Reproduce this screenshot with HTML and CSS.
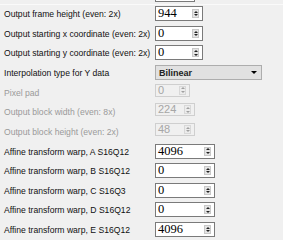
FILE: index.html
```html
<!DOCTYPE html>
<html lang="en">
<head>
  <meta charset="UTF-8">
  <title>Scaler settings</title>
  <link rel="stylesheet" href="styles.css">
</head>
<body>
  <div class="form">
    <div class="row">
      <span class="lbl"></span>
      <div class="box w40"></div>
    </div>
    <div class="top-rule"></div>
    <div class="row">
      <span class="lbl">Output frame height (even: 2x)</span>
      <div class="box w48"><span class="val">944</span><span class="arrows"><i class="up"></i><i class="down"></i></span></div>
    </div>
    <div class="row">
      <span class="lbl">Output starting x coordinate (even: 2x)</span>
      <div class="box w48"><span class="val">0</span><span class="arrows"><i class="up"></i><i class="down"></i></span></div>
    </div>
    <div class="row">
      <span class="lbl">Output starting y coordinate (even: 2x)</span>
      <div class="box w48"><span class="val">0</span><span class="arrows"><i class="up"></i><i class="down"></i></span></div>
    </div>
    <div class="row">
      <span class="lbl">Interpolation type for Y data</span>
      <div class="select"><span class="sel-val">Bilinear</span><i class="caret"></i></div>
    </div>
    <div class="row off">
      <span class="lbl">Pixel pad</span>
      <div class="box w35"><span class="val">0</span><span class="arrows"><i class="up"></i><i class="down"></i></span></div>
    </div>
    <div class="row off">
      <span class="lbl">Output block width (even: 8x)</span>
      <div class="box w40"><span class="val">224</span><span class="arrows"><i class="up"></i><i class="down"></i></span></div>
    </div>
    <div class="row off">
      <span class="lbl">Output block height (even: 2x)</span>
      <div class="box w40"><span class="val">48</span><span class="arrows"><i class="up"></i><i class="down"></i></span></div>
    </div>
    <div class="row">
      <span class="lbl">Affine transform warp, A S16Q12</span>
      <div class="box w60"><span class="val">4096</span><span class="arrows"><i class="up"></i><i class="down"></i></span></div>
    </div>
    <div class="row">
      <span class="lbl">Affine transform warp, B S16Q12</span>
      <div class="box w60"><span class="val">0</span><span class="arrows"><i class="up"></i><i class="down"></i></span></div>
    </div>
    <div class="row">
      <span class="lbl">Affine transform warp, C S16Q3</span>
      <div class="box w60"><span class="val">0</span><span class="arrows"><i class="up"></i><i class="down"></i></span></div>
    </div>
    <div class="row">
      <span class="lbl">Affine transform warp, D S16Q12</span>
      <div class="box w60"><span class="val">0</span><span class="arrows"><i class="up"></i><i class="down"></i></span></div>
    </div>
    <div class="row">
      <span class="lbl">Affine transform warp, E S16Q12</span>
      <div class="box w60"><span class="val">4096</span><span class="arrows"><i class="up"></i><i class="down"></i></span></div>
    </div>
  </div>
</body>
</html>
```

FILE: styles.css
```css
body {
  margin: 0;
  background-color: #f0f0f0;
  font-family: 'Liberation Sans', Arial, sans-serif;
  color: #000;
  overflow: hidden;
}
.form {
  margin-top: -14.4px;
}
.top-rule {
  height: 0;
  border-top: 1px solid #fafafa;
  margin-top: -1px;
}
.row {
  display: flex;
  height: 19.64px;
}
.lbl {
  width: 151px;
  padding-left: 4px;
  font-size: 8.6px;
  line-height: 19.64px;
  white-space: nowrap;
  color: #111;
}
.off .lbl {
  color: #9a9a9a;
}
.box {
  display: flex;
  align-items: center;
  box-sizing: border-box;
  height: 15px;
  margin-top: 1px;
  border: 1px solid #7a7a7a;
  background-color: #fff;
  padding-right: 3px;
}
.w35 { width: 35px; }
.w40 { width: 40px; }
.w48 { width: 48px; }
.w60 { width: 60px; }
.val {
  flex: 1;
  padding-left: 2px;
  font-family: 'Liberation Serif', 'Times New Roman', serif;
  font-size: 12.5px;
  line-height: 13px;
}
.arrows {
  display: flex;
  flex-direction: column;
  align-items: center;
  justify-content: space-around;
  box-sizing: border-box;
  width: 7px;
  height: 9px;
  background-color: #e4e4e4;
  border: 1px solid #c8c8c8;
}
.up, .down {
  display: block;
  width: 0;
  height: 0;
  border-left: 2px solid transparent;
  border-right: 2px solid transparent;
}
.up { border-bottom: 2px solid #222; }
.down { border-top: 2px solid #222; }
.off .box {
  height: 13px;
  margin-top: 0;
  border-color: #cfcfcf;
  background-color: #f0f0f0;
}
.off .val {
  font-family: 'Liberation Sans', Arial, sans-serif;
  font-size: 11px;
  color: #a6a6a6;
}
.off .arrows {
  background-color: #ececec;
  border-color: #d8d8d8;
}
.off .up { border-bottom-color: #a0a0a0; }
.off .down { border-top-color: #a0a0a0; }
.select {
  display: flex;
  align-items: center;
  box-sizing: border-box;
  width: 107px;
  height: 15px;
  margin-top: 1px;
  border: 1px solid #adadad;
  background-color: #e1e1e1;
  padding: 0 4px 0 3px;
}
.sel-val {
  flex: 1;
  font-size: 9px;
  font-weight: bold;
  color: #222;
}
.caret {
  width: 0;
  height: 0;
  border-left: 3px solid transparent;
  border-right: 3px solid transparent;
  border-top: 3px solid #000;
}
```
